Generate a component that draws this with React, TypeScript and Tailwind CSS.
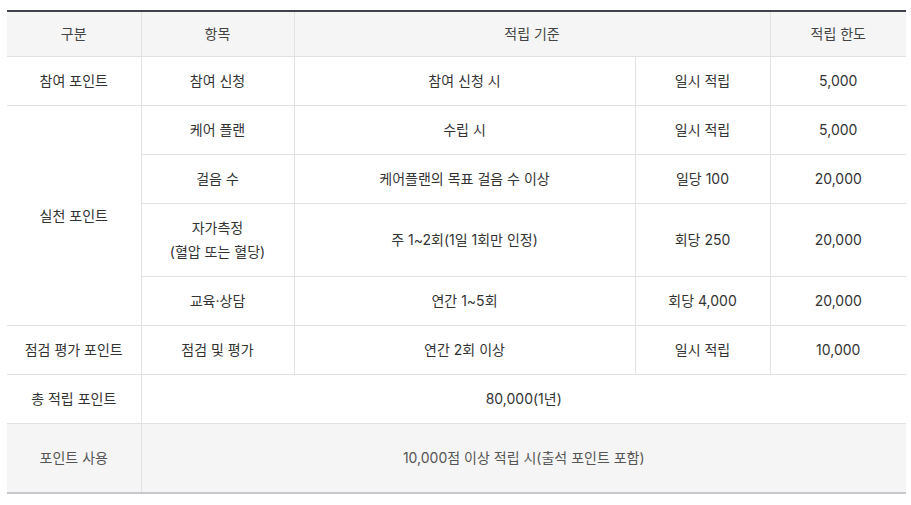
import React from "react";

const cell = "border-b border-[#e2e2e2] px-2 py-3 text-center align-middle leading-6";
const bl = "border-l border-[#e2e2e2]";

export default function App() {
  return (
    <div
      className="bg-white w-[911px] h-[505px] overflow-hidden text-[14px] text-[#333]"
      style={{ fontFamily: 'Inter, "Noto Sans CJK KR", sans-serif' }}
    >
      <div className="h-[10px] overflow-hidden pl-[7px] pr-[5px] flex justify-end">
        <div className="mt-[-17px] text-[13px] text-[#555] leading-5">(단위 : 점)</div>
      </div>
      <table className="ml-[7px] w-[899px] table-fixed border-collapse border-t-2 border-t-[#404252] border-b-2 border-b-[#c8c8cc]">
        <colgroup>
          <col className="w-[134px]" />
          <col className="w-[153px]" />
          <col className="w-[341px]" />
          <col className="w-[135px]" />
          <col className="w-[136px]" />
        </colgroup>
        <thead>
          <tr className="bg-[#f5f5f5] text-[#444]">
            <th className={`${cell} font-normal py-[10px]`}>구분</th>
            <th className={`${cell} ${bl} font-normal py-[10px]`}>항목</th>
            <th className={`${cell} ${bl} font-normal py-[10px]`} colSpan={2}>적립 기준</th>
            <th className={`${cell} ${bl} font-normal py-[10px]`}>적립 한도</th>
          </tr>
        </thead>
        <tbody>
          <tr>
            <td className={cell}>참여 포인트</td>
            <td className={`${cell} ${bl}`}>참여 신청</td>
            <td className={`${cell} ${bl}`}>참여 신청 시</td>
            <td className={`${cell} ${bl}`}>일시 적립</td>
            <td className={`${cell} ${bl}`}>5,000</td>
          </tr>
          <tr>
            <td className={cell} rowSpan={4}>실천 포인트</td>
            <td className={`${cell} ${bl}`}>케어 플랜</td>
            <td className={`${cell} ${bl}`}>수립 시</td>
            <td className={`${cell} ${bl}`}>일시 적립</td>
            <td className={`${cell} ${bl}`}>5,000</td>
          </tr>
          <tr>
            <td className={`${cell} ${bl}`}>걸음 수</td>
            <td className={`${cell} ${bl}`}>케어플랜의 목표 걸음 수 이상</td>
            <td className={`${cell} ${bl}`}>일당 100</td>
            <td className={`${cell} ${bl}`}>20,000</td>
          </tr>
          <tr>
            <td className={`${cell} ${bl}`}>
              자가측정
              <br />
              (혈압 또는 혈당)
            </td>
            <td className={`${cell} ${bl}`}>주 1~2회(1일 1회만 인정)</td>
            <td className={`${cell} ${bl}`}>회당 250</td>
            <td className={`${cell} ${bl}`}>20,000</td>
          </tr>
          <tr>
            <td className={`${cell} ${bl}`}>교육·상담</td>
            <td className={`${cell} ${bl}`}>연간 1~5회</td>
            <td className={`${cell} ${bl}`}>회당 4,000</td>
            <td className={`${cell} ${bl}`}>20,000</td>
          </tr>
          <tr>
            <td className={cell}>점검 평가 포인트</td>
            <td className={`${cell} ${bl}`}>점검 및 평가</td>
            <td className={`${cell} ${bl}`}>연간 2회 이상</td>
            <td className={`${cell} ${bl}`}>일시 적립</td>
            <td className={`${cell} ${bl}`}>10,000</td>
          </tr>
          <tr>
            <td className={cell}>총 적립 포인트</td>
            <td className={`${cell} ${bl}`} colSpan={4}>80,000(1년)</td>
          </tr>
          <tr className="bg-[#f5f5f5] text-[#555]">
            <td className={`${cell} py-[22px] border-b-0`}>포인트 사용</td>
            <td className={`${cell} ${bl} py-[22px] border-b-0`} colSpan={4}>
              10,000점 이상 적립 시(출석 포인트 포함)
            </td>
          </tr>
        </tbody>
      </table>
    </div>
  );
}
